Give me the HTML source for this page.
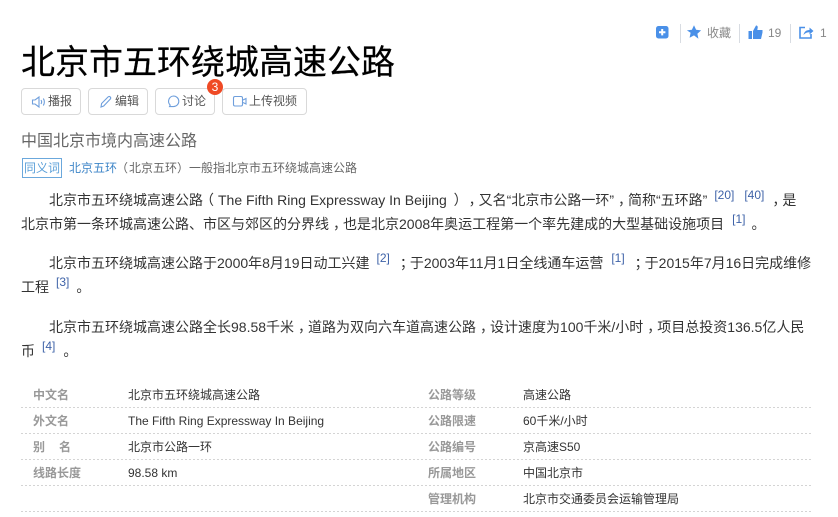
<!DOCTYPE html>
<html lang="zh">
<head>
<meta charset="utf-8">
<style>
html,body{margin:0;padding:0;background:#fff;}
body{width:838px;height:517px;position:relative;overflow:hidden;font-family:"Liberation Sans","Noto Sans CJK SC",sans-serif;color:#333;text-spacing-trim:space-all;}
.a{position:absolute;white-space:nowrap;}
.btn{position:absolute;top:88px;height:27px;border:1px solid #d9d9d9;border-radius:4px;box-sizing:border-box;font-size:12px;line-height:25px;color:#555;background:#fff;}
.btn span{position:absolute;top:0;white-space:nowrap;}
.btn svg{position:absolute;top:5px;left:9px;}
.p{position:absolute;left:21px;font-size:14px;line-height:24px;white-space:nowrap;color:#333;height:24px;}
.c{position:relative;left:4px;}
.pl{position:relative;left:-3px;}
.pr{position:relative;left:3px;}
sup{font-size:12px;color:#3f63a8;line-height:0;position:relative;top:0;vertical-align:6px;}
.k{position:absolute;font-size:12px;font-weight:bold;color:#999;white-space:nowrap;line-height:16px;}
.v{position:absolute;font-size:12px;color:#333;white-space:nowrap;line-height:16px;}
.l{position:absolute;left:21px;width:791px;height:1px;background:repeating-linear-gradient(90deg,#d4d4d4 0,#d4d4d4 2px,transparent 2px,transparent 4px);}
.sep{position:absolute;top:24px;width:1px;height:19px;background:#d8dce2;}
.t{font-size:12px;color:#888;line-height:16px;position:absolute;white-space:nowrap;}
</style>
</head>
<body>
<svg class="a" style="left:655px;top:25px" width="14" height="14" viewBox="0 0 14 14"><rect x="1" y="1" width="12.500" height="12.500" rx="2.500" fill="#4a90e8"/><path d="M7.200 4v6.400M4 7.200h6.400" stroke="#fff" stroke-width="2"/></svg>
<div class="sep" style="left:680px"></div>
<svg class="a" style="left:686px;top:24px" width="16" height="16" viewBox="0 0 16 16"><path d="M8 1.200l2.100 4.600 5 .6-3.700 3.400 1 5L8 11.400 3.600 13.800l1-5L.9 6.400l5-.6z" fill="#4a90e8"/></svg>
<div class="t" style="left:707px;top:25px">收藏</div>
<div class="sep" style="left:739px"></div>
<svg class="a" style="left:748px;top:24px" width="15" height="16" viewBox="0 0 15 16"><path d="M.5 7h3.500v8H.5zM5 7l3-5.500c1.300 0 2 1 1.700 2.300L9.300 6H14.500v2.500L13 15H5z" fill="#4a90e8"/></svg>
<div class="t" style="left:768px;top:25px">19</div>
<div class="sep" style="left:790px"></div>
<svg class="a" style="left:799px;top:25px" width="15" height="15" viewBox="0 0 15 15"><path d="M6 2.500H1v10.500h11V9" fill="none" stroke="#4a90e8" stroke-width="1.600"/><path d="M4.500 10c.5-3 2.500-5 6-5V2.500L14.500 6l-4 3.500V7.200C8 7.200 6 8 4.500 10z" fill="#4a90e8"/></svg>
<div class="t" style="left:820px;top:25px">1</div>

<div class="a" style="left:21px;top:40px;font-size:34px;line-height:46px;color:#000;-webkit-text-stroke:.2px #000;">北京市五环绕城高速公路</div>

<div class="btn" style="left:21px;width:60px;">
<svg style="left:9px;top:6px" width="16" height="14" viewBox="0 0 16 14"><path d="M1.500 5h2.500L8 2v10L4 9H1.500z" fill="none" stroke="#6f9fdc" stroke-width="1.100"/><path d="M10 5c.8 1.200.8 2.800 0 4M12.300 3.500c1.400 2 1.400 5 0 7" fill="none" stroke="#6f9fdc" stroke-width="1.100"/></svg>
<span style="left:26px">播报</span></div>
<div class="btn" style="left:88px;width:60px;">
<svg style="top:5px" width="15" height="15" viewBox="0 0 15 15"><path d="M3 13l.6-3.500L10 3c.8-.8 1.700-.8 2.300 0 .6.700.6 1.500-.2 2.300L5.700 12z" fill="none" stroke="#6f9fdc" stroke-width="1.100"/></svg>
<span style="left:26px">编辑</span></div>
<div class="btn" style="left:155px;width:60px;">
<svg style="left:10px;top:5px" width="15" height="15" viewBox="0 0 15 15"><path d="M7.500 2a5.300 5.300 0 0 1 0 10.600H3.500l.7-1.500A5.300 5.300 0 0 1 7.500 2z" fill="none" stroke="#6f9fdc" stroke-width="1.100"/></svg>
<span style="left:26px">讨论</span></div>
<div class="btn" style="left:222px;width:85px;">
<svg style="top:5px" width="16" height="15" viewBox="0 0 16 15"><rect x="1.500" y="2.500" width="9" height="9.500" rx="1.500" fill="none" stroke="#6f9fdc" stroke-width="1.100"/><path d="M11 6l3-1.500v5.500L11 8.500" fill="none" stroke="#6f9fdc" stroke-width="1.100"/></svg>
<span style="left:26px">上传视频</span></div>
<div class="a" style="left:207px;top:79px;width:16px;height:16px;border-radius:50%;background:#ef4a25;color:#fff;font-size:12px;line-height:16px;text-align:center;">3</div>

<div class="a" style="left:21px;top:130px;font-size:16px;line-height:23px;color:#666;">中国北京市境内高速公路</div>

<div class="a" style="left:22px;top:158px;width:40px;height:20px;box-sizing:border-box;border:1px solid #6ba8dc;font-size:12px;line-height:18px;color:#5a9fd8;text-align:center;">同义词</div>
<div class="a" style="left:69px;top:160px;font-size:12px;line-height:17px;color:#666;"><span style="color:#3f86c8">北京五环</span><span style="position:relative;left:-1px">（</span>北京五环）一般指北京市五环绕城高速公路</div>

<div class="p" style="top:188px;left:49px;">北京市五环绕城高速公路<span class="pl">（</span><span style="margin-left:1px">The Fifth Ring Expressway In Beijing </span><span class="pr">）</span><span class="c">，</span>又名“北京市公路一环”<span class="c">，</span>简称“五环路”<sup style="margin-left:7px">[20]</sup><sup style="margin-left:10px">[40]</sup><span class="c" style="margin-left:4px">，</span>是</div>
<div class="p" style="top:212px;">北京市第一条环城高速公路、市区与郊区的分界线<span class="c">，</span>也是北京2008年奥运工程第一个率先建成的大型基础设施项目<sup style="margin-left:8px">[1]</sup><span class="c" style="margin-left:2px">。</span></div>
<div class="p" style="top:251px;left:49px;">北京市五环绕城高速公路于2000年8月19日动工兴建<sup style="margin-left:7px">[2]</sup><span class="c" style="margin-left:6px">；</span>于2003年11月1日全线通车运营<sup style="margin-left:8px">[1]</sup><span class="c" style="margin-left:6px">；</span>于2015年7月16日完成维修</div>
<div class="p" style="top:275px;">工程<sup style="margin-left:7px">[3]</sup><span class="c" style="margin-left:3px">。</span></div>
<div class="p" style="top:315px;left:49px;">北京市五环绕城高速公路全长98.58千米<span class="c">，</span>道路为双向六车道高速公路<span class="c">，</span>设计速度为100千米/小时<span class="c">，</span>项目总投资136.5亿人民</div>
<div class="p" style="top:339px;">币<sup style="margin-left:7px">[4]</sup><span class="c" style="margin-left:4px">。</span></div>

<div class="k" style="left:33px;top:387px">中文名</div><div class="v" style="left:128px;top:387px">北京市五环绕城高速公路</div>
<div class="k" style="left:33px;top:413px">外文名</div><div class="v" style="left:128px;top:413px">The Fifth Ring Expressway In Beijing</div>
<div class="k" style="left:33px;top:439px">别<span style="margin-left:14px">名</span></div><div class="v" style="left:128px;top:439px">北京市公路一环</div>
<div class="k" style="left:33px;top:465px">线路长度</div><div class="v" style="left:128px;top:465px">98.58 km</div>

<div class="k" style="left:428px;top:387px">公路等级</div><div class="v" style="left:523px;top:387px">高速公路</div>
<div class="k" style="left:428px;top:413px">公路限速</div><div class="v" style="left:523px;top:413px">60千米/小时</div>
<div class="k" style="left:428px;top:439px">公路编号</div><div class="v" style="left:523px;top:439px">京高速S50</div>
<div class="k" style="left:428px;top:465px">所属地区</div><div class="v" style="left:523px;top:465px">中国北京市</div>
<div class="k" style="left:428px;top:491px">管理机构</div><div class="v" style="left:523px;top:491px">北京市交通委员会运输管理局</div>

<div class="l" style="top:407px"></div>
<div class="l" style="top:433px"></div>
<div class="l" style="top:459px"></div>
<div class="l" style="top:485px"></div>
<div class="l" style="top:511px"></div>
</body>
</html>
